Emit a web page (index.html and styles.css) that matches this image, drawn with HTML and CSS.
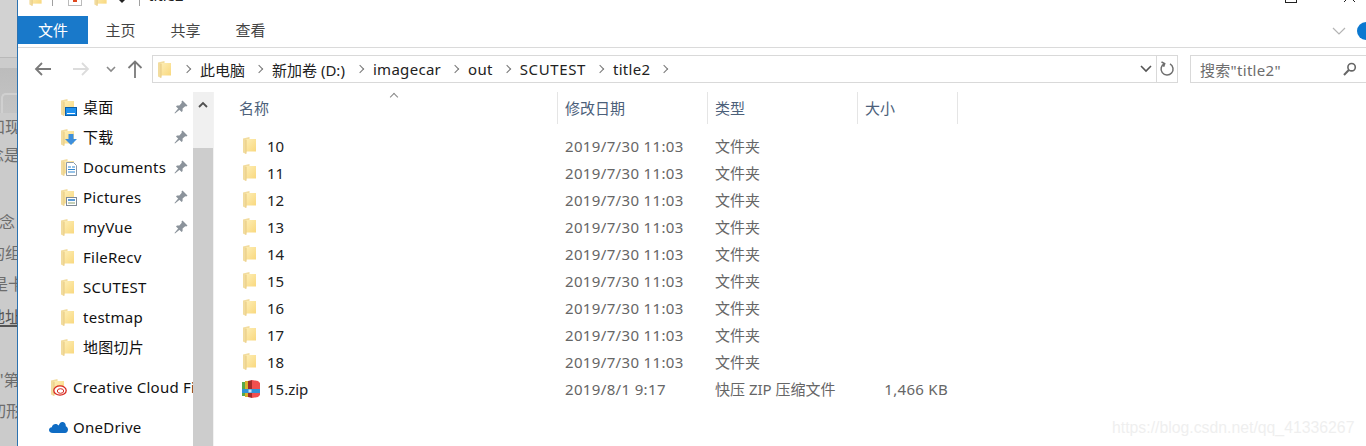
FILE: index.html
```html
<!DOCTYPE html>
<html lang="zh-CN">
<head>
    <meta charset="UTF-8">
    <meta name="viewport" content="width=device-width, initial-scale=1.0">
    <title>title2</title>
    <link rel="stylesheet" href="styles.css">
</head>
<body>
    <svg class="defs" width="0" height="0">
        <defs>
            <linearGradient id="folderfill" x1="0" y1="0" x2="1" y2="1">
                <stop offset="0" stop-color="#fdeeb6"/>
                <stop offset="1" stop-color="#f9d87e"/>
            </linearGradient>
        </defs>
        <symbol id="folder" viewBox="0 0 13 17">
            <path d="M3 2 H13 V14.5 H3 Z" fill="url(#folderfill)"/>
            <path d="M0 1.5 L6.5 0 V2 H3.5 V14.5 L3 17 L0 15.5 Z" fill="#f2dc9e"/>
            <path d="M3 3 V16.8" stroke="#e6c679" stroke-width="0.7"/>
        </symbol>
        <symbol id="pin" viewBox="0 0 14 14">
            <path d="M8.5 0.5 L13.5 5.5 L12.3 6.6 L11.2 6.2 L8.6 8.6 L8.6 11 L7.6 12 L2 6.4 L3 5.4 L5.4 5.4 L7.8 2.8 L7.4 1.7 Z M4.2 8.4 L5.6 9.8 L1 13.5 L0.5 13 Z" fill="#8b939b"/>
        </symbol>
    </svg>

    <div class="backdrop">
        <div class="backdrop-top"></div>
        <div class="backdrop-band"></div>
        <div class="backdrop-dark"><div class="corner"></div></div>
        <div class="backdrop-text">
            <p class="line-a">和现</p>
            <p class="line-b">念是</p>
            <p class="line-c">概念</p>
            <p class="line-d">的组</p>
            <p class="line-e">是卡</p>
            <p class="line-f">地址</p>
            <p class="line-g">"第</p>
            <p class="line-h">切形</p>
        </div>
    </div>

    <div class="window">
        <div class="titlebar">
            <div class="quick">
                <svg class="quick-folder" width="13" height="16"><use href="#folder"/></svg>
                <span class="sep"></span>
                <span class="quick-check"><i></i></span>
                <svg class="quick-folder second" width="13" height="16"><use href="#folder"/></svg>
                <span class="quick-caret"></span>
                <span class="sep last"></span>
                <span class="title-text">title2</span>
            </div>
            <div class="controls">
                <span class="restore"></span>
                <svg class="close" width="13" height="13" viewBox="0 0 13 13"><path d="M1 1 L12 12 M12 1 L1 12" stroke="#222" fill="none"/></svg>
            </div>
        </div>

        <div class="ribbon">
            <div class="tab active">文件</div>
            <div class="tab">主页</div>
            <div class="tab">共享</div>
            <div class="tab">查看</div>
            <div class="ribbon-right">
                <svg width="14" height="9" viewBox="0 0 14 9"><path d="M1 1 L7 7 L13 1" stroke="#b4b4b4" fill="none" stroke-width="1.2"/></svg>
                <span class="help"></span>
            </div>
        </div>

        <div class="addressrow">
            <div class="navbtns">
                <svg width="18" height="16" viewBox="0 0 18 16"><path d="M17 8 H2 M8 2 L2 8 L8 14" stroke="#7a7a7a" stroke-width="1.8" fill="none"/></svg>
                <svg width="18" height="16" viewBox="0 0 18 16"><path d="M1 8 H16 M10 2 L16 8 L10 14" stroke="#dcdcdc" stroke-width="1.8" fill="none"/></svg>
                <svg width="10" height="7" viewBox="0 0 10 7"><path d="M1 1 L5 5 L9 1" stroke="#8a8a8a" stroke-width="1.6" fill="none"/></svg>
                <svg width="16" height="18" viewBox="0 0 16 18"><path d="M8 18 V2 M1.5 8 L8 1.5 L14.5 8" stroke="#7a7a7a" stroke-width="1.8" fill="none"/></svg>
            </div>
            <div class="address">
                <svg class="addr-folder" width="13" height="17"><use href="#folder"/></svg>
                <div class="crumbs">
                    <i class="chev"></i><span>此电脑</span>
                    <i class="chev"></i><span class="drive-crumb">新加卷 (D:)</span>
                    <i class="chev"></i><span class="latin">imagecar</span>
                    <i class="chev"></i><span class="latin">out</span>
                    <i class="chev"></i><span class="latin wide">SCUTEST</span>
                    <i class="chev"></i><span class="latin">title2</span>
                    <i class="chev"></i>
                </div>
                <svg class="addr-down" width="12" height="8" viewBox="0 0 12 8"><path d="M1 1 L6 6 L11 1" stroke="#555" stroke-width="1.6" fill="none"/></svg>
                <div class="refresh">
                    <svg width="16" height="16" viewBox="0 0 16 16"><path d="M5.5 2.6 A6 6 0 1 0 11 2.8 M2.5 1 L5.7 2.6 L4.6 5.8" stroke="#6e6e6e" stroke-width="1.5" fill="none"/></svg>
                </div>
            </div>
            <div class="search">
                <span>搜索"title2"</span>
                <svg width="14" height="14" viewBox="0 0 14 14"><circle cx="8.6" cy="5.2" r="3.7" stroke="#666" stroke-width="1.6" fill="none"/><path d="M5.8 8 L1 13" stroke="#666" stroke-width="2" fill="none"/></svg>
            </div>
        </div>

        <div class="main">
            <div class="nav">
                <div class="nav-item">
                    <span class="nav-icon"><svg width="13" height="17"><use href="#folder"/></svg>
                        <svg class="badge" width="12" height="9" viewBox="0 0 12 9"><rect width="11" height="8" y="0.5" x="0.5" fill="#1e90ee" stroke="#0a5ea8"/><path d="M2 6.5 H10" stroke="#fff"/></svg></span>
                    <span class="nav-label cjk">桌面</span>
                    <svg class="nav-pin" width="14" height="14"><use href="#pin"/></svg>
                </div>
                <div class="nav-item">
                    <span class="nav-icon"><svg width="13" height="17"><use href="#folder"/></svg>
                        <svg class="badge" width="12" height="12" viewBox="0 0 12 12"><path d="M3.5 0 H8.5 V5 H12 L6 11 L0 5 H3.5 Z" fill="#3d8fdc"/></svg></span>
                    <span class="nav-label cjk">下载</span>
                    <svg class="nav-pin" width="14" height="14"><use href="#pin"/></svg>
                </div>
                <div class="nav-item">
                    <span class="nav-icon"><svg width="13" height="17"><use href="#folder"/></svg>
                        <svg class="badge" width="11" height="14" viewBox="0 0 11 14"><path d="M0.5 0.5 H7.5 L10.5 3.5 V13.5 H0.5 Z" fill="#fff" stroke="#8d9aa8"/><path d="M2 5 H5 M6 5 H9 M2 7.5 H9 M2 10 H9" stroke="#2f86d0"/></svg></span>
                    <span class="nav-label">Documents</span>
                    <svg class="nav-pin" width="14" height="14"><use href="#pin"/></svg>
                </div>
                <div class="nav-item">
                    <span class="nav-icon"><svg width="13" height="17"><use href="#folder"/></svg>
                        <svg class="badge" width="11" height="9" viewBox="0 0 11 9"><rect x="0.5" y="0.5" width="10" height="8" fill="#fff" stroke="#7f8a96"/><path d="M2 3 H9" stroke="#5c9bd6" stroke-width="2"/><path d="M2 6 H9" stroke="#8ba06f"/></svg></span>
                    <span class="nav-label">Pictures</span>
                    <svg class="nav-pin" width="14" height="14"><use href="#pin"/></svg>
                </div>
                <div class="nav-item">
                    <span class="nav-icon"><svg width="13" height="17"><use href="#folder"/></svg></span>
                    <span class="nav-label">myVue</span>
                    <svg class="nav-pin" width="14" height="14"><use href="#pin"/></svg>
                </div>
                <div class="nav-item">
                    <span class="nav-icon"><svg width="13" height="17"><use href="#folder"/></svg></span>
                    <span class="nav-label">FileRecv</span>
                </div>
                <div class="nav-item">
                    <span class="nav-icon"><svg width="13" height="17"><use href="#folder"/></svg></span>
                    <span class="nav-label">SCUTEST</span>
                </div>
                <div class="nav-item">
                    <span class="nav-icon"><svg width="13" height="17"><use href="#folder"/></svg></span>
                    <span class="nav-label">testmap</span>
                </div>
                <div class="nav-item">
                    <span class="nav-icon"><svg width="13" height="17"><use href="#folder"/></svg></span>
                    <span class="nav-label cjk">地图切片</span>
                </div>
                <div class="nav-item nav-root cloud">
                    <span class="nav-icon"><svg width="13" height="17"><use href="#folder"/></svg>
                        <svg class="badge" width="14" height="11" viewBox="0 0 14 11"><ellipse cx="7" cy="5.5" rx="6.2" ry="4.6" fill="#fff" stroke="#d8281f" stroke-width="1.3"/><ellipse cx="7.5" cy="6" rx="3.2" ry="2.3" fill="none" stroke="#d8281f"/></svg></span>
                    <span class="nav-label">Creative Cloud Files</span>
                </div>
                <div class="nav-item nav-root drive">
                    <span class="nav-icon"><svg width="19" height="12" viewBox="0 0 19 12"><path d="M4 12 C1 12 0 10.5 0 9 C0 7.3 1.3 6.2 2.8 6.2 C3.2 4 5 3 6.5 3 C7.8 3 9 3.6 9.7 4.6 C10.4 2 12 0.5 14 1 C15.8 1.3 17 3 16.8 5.2 C18 5.5 19 7 19 8.6 C19 10.5 17.8 12 16 12 Z" fill="#0f6cc4"/></svg></span>
                    <span class="nav-label">OneDrive</span>
                </div>
            </div>

            <div class="scrollbar">
                <div class="scroll-up">
                    <svg width="10" height="7" viewBox="0 0 10 7"><path d="M1 6 L5 2 L9 6" stroke="#505050" stroke-width="1.8" fill="none"/></svg>
                </div>
            </div>

            <div class="list">
                <div class="list-head">
                    <div class="col-name">名称<span class="sort"></span></div>
                    <div class="col-date">修改日期</div>
                    <div class="col-type">类型</div>
                    <div class="col-size">大小</div>
                </div>
                <div id="rows"></div>
            </div>
        </div>
    </div>

    <div class="watermark">https://blog.csdn.net/qq_41336267</div>

    <script>
        // File rows
        const files = ['10', '11', '12', '13', '14', '15', '16', '17', '18'];
        const folderIcon = '<svg class="row-icon" width="13" height="17"><use href="#folder"/></svg>';
        const zipIcon = `<svg class="row-icon zip" width="18" height="18" viewBox="0 0 18 18">
            <path d="M0 2 H3 V16 H0 Z" fill="#58a84a"/>
            <path d="M3 1 H6 V17 H3 Z" fill="#d9b02c"/>
            <path d="M6 1 L10 0 V18 L6 17 Z" fill="#a32c2a"/>
            <path d="M10 0 L16 1 L18 3 V15 L16 17 L10 18 Z" fill="#f05050"/>
            <path d="M0 9 H18 V13 H0 Z" fill="#2f93d8"/>
            <rect x="6.5" y="9.5" width="3" height="3" fill="#cfe8f8"/>
        </svg>`;

        const rows = files.map((name) => `
            <div class="row">
                <div class="col-name">${folderIcon}<span>${name}</span></div>
                <div class="col-date">2019/7/30 11:03</div>
                <div class="col-type">文件夹</div>
                <div class="col-size"></div>
            </div>`).join('');

        document.getElementById('rows').innerHTML = rows + `
            <div class="row">
                <div class="col-name">${zipIcon}<span>15.zip</span></div>
                <div class="col-date">2019/8/1 9:17</div>
                <div class="col-type">快压 ZIP 压缩文件</div>
                <div class="col-size">1,466 KB</div>
            </div>`;
    </script>
</body>
</html>
```

FILE: styles.css
```css
* {
    margin: 0;
    padding: 0;
    box-sizing: border-box;
    font-family: "Noto Sans", "Noto Sans CJK SC", sans-serif;
}

html, body {
    height: 446px;
    overflow: hidden;
}

body {
    display: flex;
    position: relative;
    background: white;
    font-size: 15px;
}

.defs {
    position: absolute;
}

/* Page behind the window */
.backdrop {
    width: 18px;
    flex: none;
    background: #cbcbcb;
    border-right: 1px solid #2c72b0;
    overflow: hidden;
}

.backdrop-top {
    height: 58px;
    background: #d2d2d2;
    border-bottom: 1px solid #b9b9b9;
}

.backdrop-band {
    height: 10px;
    background: #cccccc;
}

.backdrop-dark {
    height: 45px;
    padding: 25px 0 0 1px;
    background: linear-gradient(#bcbcbc, #c4c4c4);
}

.corner {
    height: 20px;
    border-top: 2px solid #d0d0d0;
    border-left: 2px solid #d0d0d0;
    border-top-left-radius: 5px;
}

.backdrop-text {
    color: #6d6d6d;
    font-size: 16px;
}

.backdrop-text p {
    height: 31px;
    line-height: 31px;
    white-space: nowrap;
}

.backdrop-text .line-a {
    height: 27px;
    line-height: 28px;
    margin-left: -11px;
}

.backdrop-text .line-b {
    margin-left: -12px;
}

.backdrop-text .line-c {
    margin-top: 36px;
    margin-left: -17px;
}

.backdrop-text .line-d {
    margin-left: -11px;
}

.backdrop-text .line-e {
    margin-left: -8px;
}

.backdrop-text .line-f {
    height: 22px;
    line-height: 24px;
    margin-top: 5px;
    margin-left: -11px;
    padding-right: 20px;
    border-bottom: 2px solid #555;
    color: #555;
}

.backdrop-text .line-g {
    margin-top: 38px;
    margin-left: -3px;
}

.backdrop-text .line-h {
    margin-left: -10px;
}

/* Window */
.window {
    flex: 1;
    min-width: 0;
    display: flex;
    flex-direction: column;
}

.titlebar {
    height: 16px;
    display: flex;
    justify-content: space-between;
    overflow: hidden;
}

.quick {
    display: flex;
    align-items: flex-end;
    height: 6px;
    padding-left: 11px;
}

.quick-folder {
    flex: none;
}

.quick-folder.second {
    margin-left: 12px;
}

.sep {
    width: 1px;
    height: 6px;
    background: #a0a0a0;
    margin-left: 10px;
}

.sep.last {
    margin-left: 14px;
}

.quick-check {
    width: 14px;
    height: 8px;
    margin-left: 15px;
    border: 1px solid #bbb;
    border-top: none;
}

.quick-check i {
    display: block;
    width: 4px;
    height: 4px;
    background: #e0481e;
    margin: 0 auto;
}

.quick-caret {
    border: 3px solid transparent;
    border-top-color: #222;
    margin-left: 12px;
    align-self: flex-start;
}

.title-text {
    font-size: 15px;
    line-height: 15px;
    color: #222;
    margin-left: 8px;
    margin-bottom: 3px;
}

.controls {
    display: flex;
    gap: 46px;
    padding-right: 10px;
}

.restore {
    display: block;
    width: 12px;
    height: 3px;
    border: 1px solid #222;
    border-top: none;
}

.close {
    margin-top: -10px;
}

.ribbon {
    height: 32px;
    display: flex;
    align-items: flex-start;
    border-bottom: 1px solid #dadada;
}

.tab {
    height: 28px;
    width: 65px;
    line-height: 28px;
    text-align: center;
    color: #444;
}

.tab.active {
    width: 70px;
    background: #1979ca;
    color: white;
}

.ribbon-right {
    margin-left: auto;
    display: flex;
    align-items: center;
    height: 30px;
    gap: 11px;
}

.help {
    display: block;
    width: 9px;
    height: 18px;
    background: #0b78d0;
    border-radius: 9px 0 0 9px;
}

.addressrow {
    display: flex;
    align-items: center;
    height: 28px;
    margin-top: 7px;
}

.navbtns {
    width: 134px;
    display: flex;
    align-items: center;
    padding-left: 16px;
}

.navbtns svg:nth-child(2) {
    margin-left: 20px;
}

.navbtns svg:nth-child(3) {
    margin-left: 16px;
}

.navbtns svg:nth-child(4) {
    margin-left: 11px;
}

.address {
    width: 1026px;
    height: 28px;
    border: 1px solid #d9d9d9;
    display: flex;
    align-items: center;
    padding-left: 5px;
}

.addr-folder {
    flex: none;
}

.crumbs {
    display: flex;
    align-items: center;
    flex: 1;
    color: #222;
    padding-left: 13px;
}

.crumbs span {
    margin-right: 11px;
    white-space: nowrap;
}

.crumbs .drive-crumb {
    margin-right: 12px;
}

.crumbs .latin {
    letter-spacing: 0.3px;
}

.crumbs .wide {
    letter-spacing: 0.6px;
}

.chev {
    display: block;
    flex: none;
    width: 6px;
    height: 6px;
    border-top: 1.5px solid #777;
    border-right: 1.5px solid #777;
    transform: rotate(45deg);
    margin-right: 10px;
}

.addr-down {
    margin-right: 4px;
}

.refresh {
    width: 21px;
    height: 26px;
    border-left: 1px solid #d9d9d9;
    display: flex;
    align-items: center;
    justify-content: center;
}

.search {
    width: 176px;
    height: 28px;
    margin-left: 12px;
    border: 1px solid #d9d9d9;
    border-right: none;
    display: flex;
    align-items: center;
    justify-content: space-between;
    padding: 0 9px;
    color: #6d6d6d;
    letter-spacing: 0.3px;
}

.main {
    flex: 1;
    min-height: 0;
    margin-top: 9px;
    display: flex;
}

/* Navigation pane */
.nav {
    width: 175px;
    flex: none;
    overflow: hidden;
    color: #111;
}

.nav-item {
    height: 30px;
    display: flex;
    align-items: center;
    padding-left: 43px;
    white-space: nowrap;
}

.nav-icon {
    width: 22px;
    flex: none;
    display: flex;
    position: relative;
}

.badge {
    position: absolute;
    right: 6px;
    bottom: 0;
}

.nav-label {
    flex: 1;
    letter-spacing: 0.25px;
}

.nav-label.cjk {
    padding-bottom: 2px;
}

.nav-pin {
    margin-right: 5px;
    flex: none;
}

.nav-root {
    padding-left: 33px;
}

.cloud {
    margin-top: 10px;
}

.drive {
    margin-top: 10px;
    padding-left: 31px;
}

.drive .nav-icon {
    width: 24px;
}

.scrollbar {
    width: 20px;
    flex: none;
    background: #cdcdcd;
}

.scroll-up {
    height: 56px;
    background: #f0f0f0;
    display: flex;
    justify-content: center;
    padding-top: 9px;
}

/* File list */
.list {
    flex: 1;
    border-left: 1px solid #f2f2f2;
}

.list-head,
.row {
    display: grid;
    grid-template-columns: 344px 150px 150px 100px;
}

.list-head {
    height: 32px;
    margin-bottom: 8px;
    color: #4c607a;
}

.list-head > div {
    border-right: 1px solid #e5e5e5;
    line-height: 32px;
    padding-left: 7px;
}

.list-head > div:first-child {
    padding-left: 25px;
    position: relative;
}

.sort {
    position: absolute;
    left: 177px;
    top: 2px;
    width: 6px;
    height: 6px;
    border-top: 1px solid #888;
    border-left: 1px solid #888;
    transform: rotate(45deg);
}

.row {
    height: 27px;
    align-items: center;
    color: #666;
}

.row > div {
    padding-left: 7px;
}

.row .col-name {
    display: flex;
    align-items: center;
    padding-left: 29px;
    color: #222;
}

.row .col-date {
    letter-spacing: 0.35px;
}

.row .col-size {
    padding: 0 10px 0 0;
    text-align: right;
    letter-spacing: 0.3px;
}

.row-icon {
    flex: none;
    margin-right: 11px;
}

.zip {
    margin-left: -1px;
    margin-right: 7px;
}

.watermark {
    position: absolute;
    left: 1112px;
    top: 419px;
    font-family: "Liberation Sans", sans-serif;
    font-size: 15.8px;
    color: #efefef;
}
```
